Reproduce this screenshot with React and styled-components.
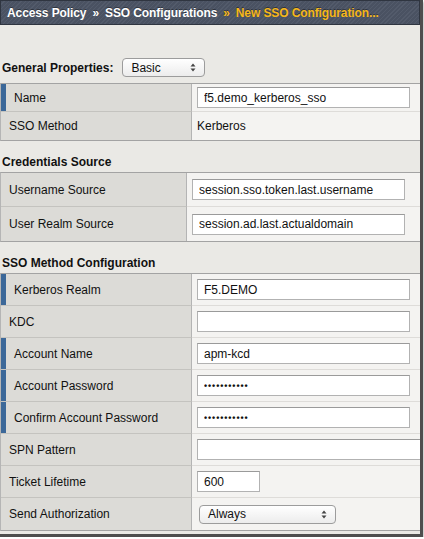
import { createGlobalStyle, styled } from "styled-components";

const GlobalStyle = createGlobalStyle`
    body {
        margin: 0;
        background: #ffffff;
        font-family: "Liberation Sans", Arial, sans-serif;
    }
`;

const sections = [
    {
        title: "Credentials Source",
        labelWidth: 187,
        rowHeight: 34,
        rows: [
            { label: "Username Source", kind: "input", value: "session.sso.token.last.username" },
            { label: "User Realm Source", kind: "input", value: "session.ad.last.actualdomain" },
        ],
    },
    {
        title: "SSO Method Configuration",
        labelWidth: 192,
        rowHeight: 32,
        rows: [
            { label: "Kerberos Realm", kind: "input", value: "F5.DEMO", required: true },
            { label: "KDC", kind: "input", value: "" },
            { label: "Account Name", kind: "input", value: "apm-kcd", required: true },
            { label: "Account Password", kind: "password", value: "•••••••••••", required: true },
            { label: "Confirm Account Password", kind: "password", value: "•••••••••••", required: true },
            { label: "SPN Pattern", kind: "input", value: "", width: 240 },
            { label: "Ticket Lifetime", kind: "input", value: "600", width: 63 },
            { label: "Send Authorization", kind: "select", value: "Always" },
        ],
    },
];

const Arrows = () => (
    <svg width="6" height="9" viewBox="0 0 6 9">
        <path d="M3 0.5 L5.5 3.5 L0.5 3.5 Z" fill="#444" />
        <path d="M3 8.5 L5.5 5.5 L0.5 5.5 Z" fill="#444" />
    </svg>
);

const FieldValue = ({ row }) => {
    if (row.kind === "select") {
        return (
            <SelectBox $width={137} $left={2}>
                <span>{row.value}</span>
                <Arrows />
            </SelectBox>
        );
    }
    if (row.kind === "text") return <PlainText>{row.value}</PlainText>;
    return (
        <TextInput
            readOnly
            value={row.value}
            $width={row.width || 213}
            $dots={row.kind === "password"}
        />
    );
};

const FormTable = ({ rows, labelWidth, rowHeight }) => (
    <Table>
        {rows.map((row, i) => (
            <Row key={row.label} $labelWidth={labelWidth} $height={rowHeight} $last={i === rows.length - 1}>
                <LabelCell $required={row.required}>{row.label}</LabelCell>
                <ValueCell>
                    <FieldValue row={row} />
                </ValueCell>
            </Row>
        ))}
    </Table>
);

const App = () => {
    return (
        <>
            <GlobalStyle />
            <Frame>
                <Header>
                    <Crumb>Access Policy</Crumb>
                    <Sep>»</Sep>
                    <Crumb>SSO Configurations</Crumb>
                    <Sep $current>»</Sep>
                    <Crumb $current>New SSO Configuration...</Crumb>
                </Header>
                <Body>
                    <GeneralBar>
                        <SectionTitle>General Properties:</SectionTitle>
                        <SelectBox $width={83} $left={0}>
                            <span>Basic</span>
                            <Arrows />
                        </SelectBox>
                    </GeneralBar>
                    <FormTable
                        labelWidth={192}
                        rowHeight={28}
                        rows={[
                            { label: "Name", kind: "input", value: "f5.demo_kerberos_sso", required: true },
                            { label: "SSO Method", kind: "text", value: "Kerberos" },
                        ]}
                    />
                    {sections.map((s) => (
                        <div key={s.title}>
                            <SectionHead>
                                <SectionTitle>{s.title}</SectionTitle>
                            </SectionHead>
                            <FormTable rows={s.rows} labelWidth={s.labelWidth} rowHeight={s.rowHeight} />
                        </div>
                    ))}
                </Body>
            </Frame>
        </>
    );
};

export default App;

//styled
const Frame = styled.div`
    width: 420px;
    border-right: 3px solid #4e4e4e;
    border-bottom: 3px solid #4e4e4e;
    box-shadow: 1px 2px 2px rgba(0, 0, 0, 0.25);
    background: #eae9e5;
    overflow: hidden;
`;

const Header = styled.div`
    height: 23px;
    display: flex;
    align-items: center;
    gap: 6px;
    padding-left: 6px;
    border: 1px solid #2f3540;
    background: repeating-linear-gradient(
        135deg,
        #4a5262 0px,
        #4a5262 2px,
        #535b6b 2px,
        #535b6b 3px
    );
    font-size: 12px;
    font-weight: bold;
    letter-spacing: -0.1px;
    white-space: nowrap;
`;

const Crumb = styled.span`
    color: ${(p) => (p.$current ? "#f6b71a" : "#ffffff")};
    text-shadow: 0 -1px 0 rgba(0, 0, 0, 0.4);
`;

const Sep = styled(Crumb)`
    font-size: 12px;
`;

const Body = styled.div`
    padding-top: 33px;
    padding-bottom: 3px;
`;

const GeneralBar = styled.div`
    display: flex;
    align-items: center;
    gap: 9px;
    padding-left: 2px;
    margin-bottom: 6px;
`;

const SectionTitle = styled.div`
    font-size: 12px;
    font-weight: bold;
    color: #111;
    line-height: 16px;
`;

const SectionHead = styled.div`
    height: 31px;
    display: flex;
    align-items: flex-end;
    padding: 0 0 2px 2px;
    box-sizing: border-box;
`;

const SelectBox = styled.div`
    width: ${(p) => p.$width}px;
    height: 19px;
    margin-left: ${(p) => p.$left}px;
    box-sizing: border-box;
    display: flex;
    align-items: center;
    justify-content: space-between;
    padding: 0 8px 0 8px;
    border: 1px solid #9c9c9c;
    border-radius: 4px;
    background: linear-gradient(#ffffff, #ececec);
    font-size: 12px;
    color: #111;
`;

const Table = styled.div`
    border-top: 1px solid #a3a3a3;
    border-bottom: 1px solid #a3a3a3;
    border-left: 1px solid #b5b5b5;
`;

const Row = styled.div`
    display: grid;
    grid-template-columns: ${(p) => p.$labelWidth - 1}px 1fr;
    height: ${(p) => p.$height}px;
    box-sizing: border-box;
    & > div {
        border-bottom: ${(p) => (p.$last ? "none" : "1px solid")};
    }
`;

const LabelCell = styled.div`
    display: flex;
    align-items: center;
    background: #dcdbd7;
    border-bottom-color: #c4c3bf !important;
    border-right: 1px solid #b4b4b4;
    padding-left: ${(p) => (p.$required ? 13 : 8)}px;
    box-shadow: ${(p) => (p.$required ? "inset 5px 0 0 #3c6899" : "none")};
    font-size: 12px;
    color: #111;
    white-space: nowrap;
`;

const ValueCell = styled.div`
    display: flex;
    align-items: center;
    background: #f4f3f1;
    border-bottom-color: #dedcd9 !important;
    padding-left: 5px;
    overflow: hidden;
`;

const PlainText = styled.span`
    font-size: 12px;
    color: #111;
`;

const TextInput = styled.input`
    width: ${(p) => p.$width}px;
    height: 21px;
    box-sizing: border-box;
    flex-shrink: 0;
    margin: 0;
    padding: 0 6px;
    border: 1px solid #b2b2b2;
    border-top-color: #9a9a9a;
    border-radius: 0;
    background: #ffffff;
    font-family: "Liberation Sans", Arial, sans-serif;
    font-size: ${(p) => (p.$dots ? "9px" : "12px")};
    font-weight: ${(p) => (p.$dots ? "bold" : "normal")};
    letter-spacing: ${(p) => (p.$dots ? "0.9px" : "normal")};
    color: #111;
    outline: none;
`;
